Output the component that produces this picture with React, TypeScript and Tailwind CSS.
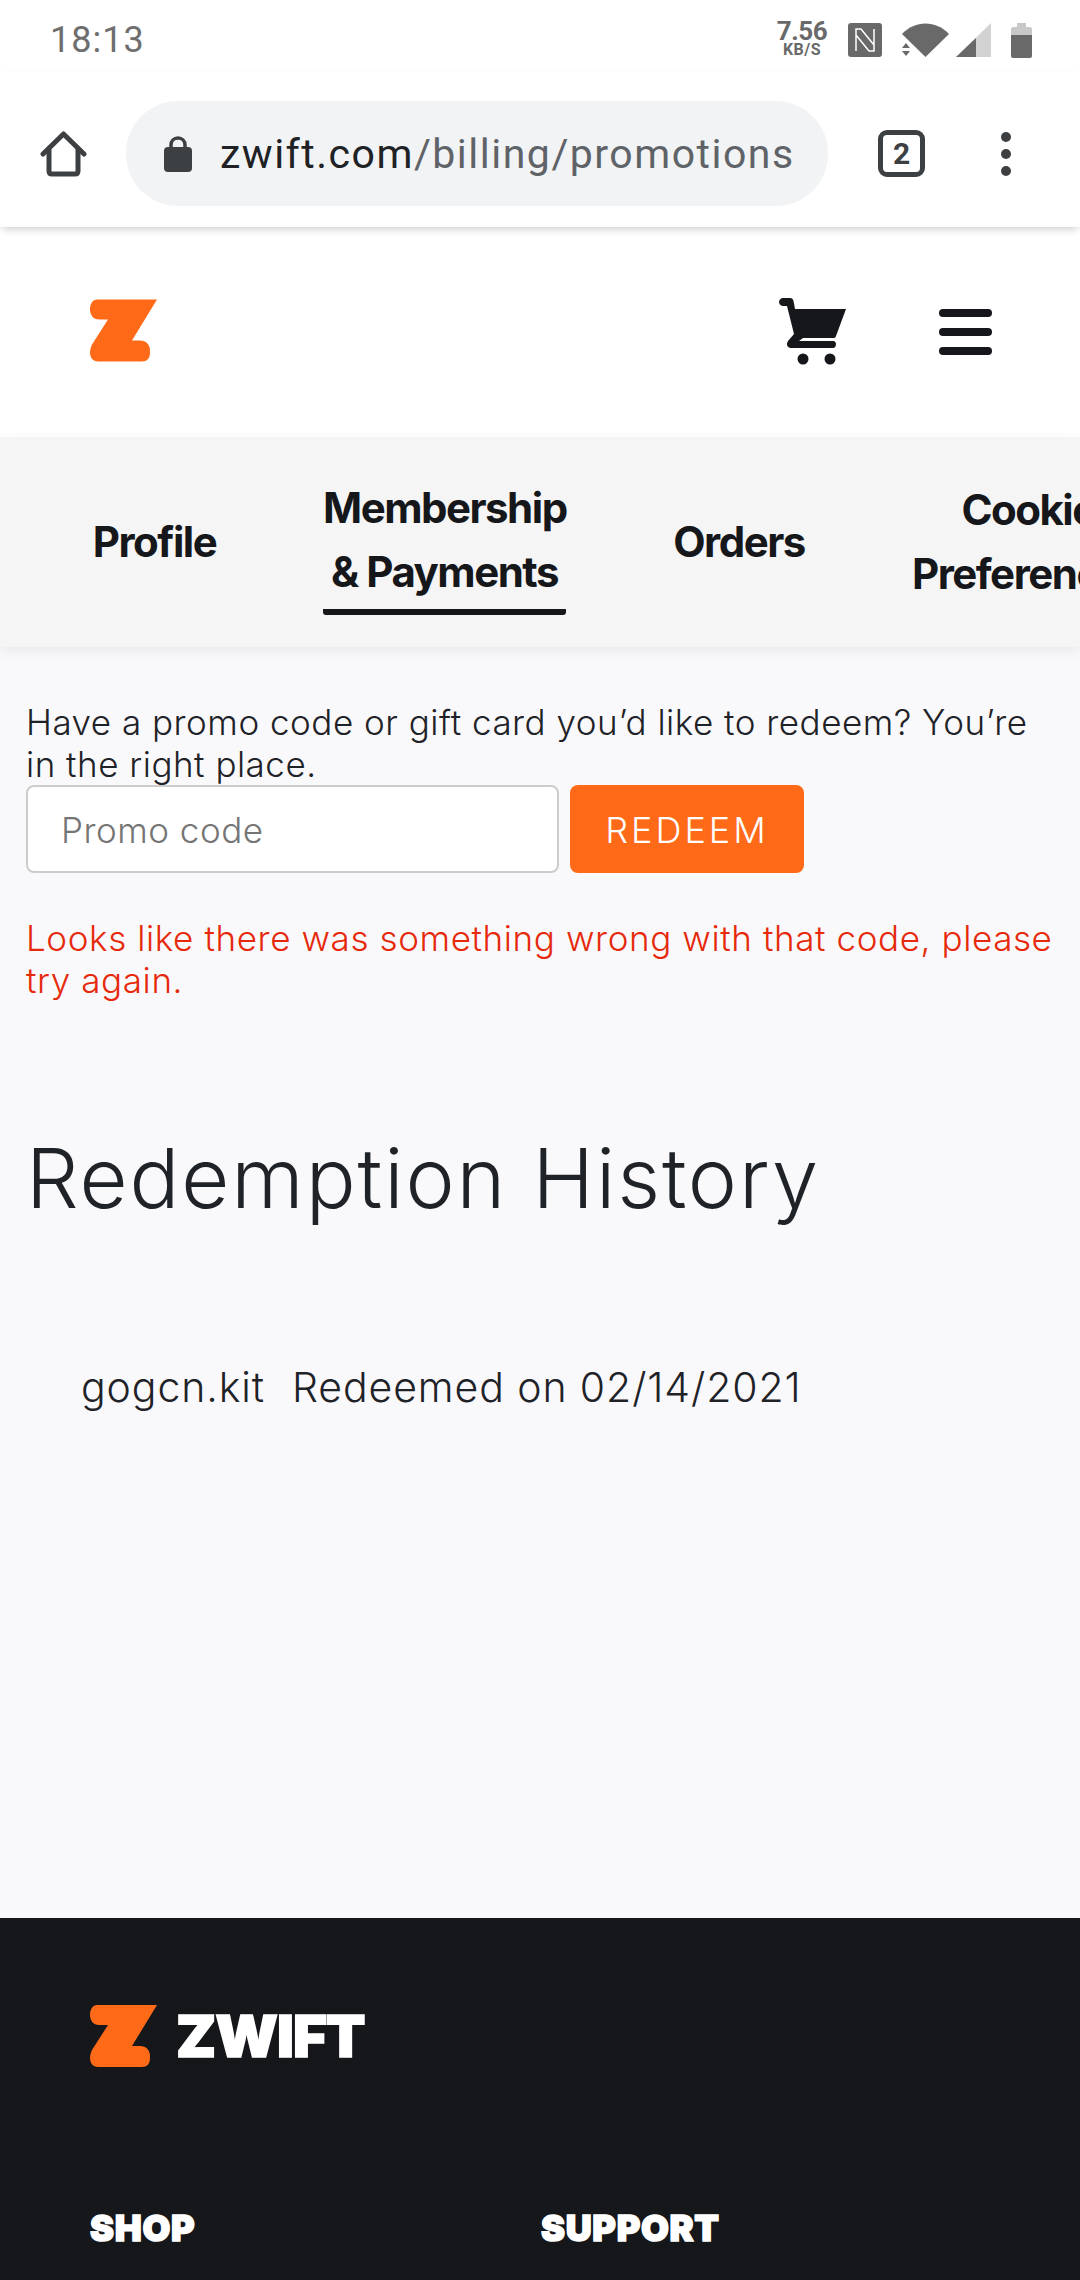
function ZMark({ className }: { className: string }) {
  return (
    <svg viewBox="0 0 67 62" className={className} fill="#ff6a19">
      <path d="M7 0H67L42 41H50C56 41 60 45 60 51V53C60 59 57 62 52 62H8C3 62 0 58 0 53C0 50 1 47 2 45L18 20H9C3 20 0 15 0 10C0 4 3 0 7 0Z" />
    </svg>
  )
}

function StatusBar() {
  return (
    <div className="flex h-[72px] items-center justify-between pl-[50px] pr-[48px] bg-white">
      <span className="text-[36px] leading-none tracking-[1px] text-[#6e6e6e] mt-[8px] font-['Roboto',sans-serif]">18:13</span>
      <div className="flex items-center mt-[8px] text-[#696969]">
        <div className="flex flex-col items-center w-[50px] -mt-[4px] font-['Roboto',sans-serif] font-bold">
          <span className="text-[26px] leading-[24px] tracking-[-0.5px]">7.56</span>
          <span className="text-[16px] leading-[14px] tracking-[0.5px]">KB/S</span>
        </div>
        <svg viewBox="0 0 34 34" className="w-[34px] h-[34px] ml-[21px]">
          <rect width="34" height="34" rx="3" fill="#696969" />
          <path d="M8 28V6H13L26 22M26 6V28H21L8 12" fill="none" stroke="#fff" strokeWidth="1.500" />
        </svg>
        <svg viewBox="0 0 47 34" className="w-[47px] h-[34px] ml-[20px]">
          <path d="M0 11C13 -3 34 -3 47 11L23.500 34Z" fill="#696969" />
          <path d="M4 20L8 25H0ZM4 33L0 28H8Z" fill="#696969" />
        </svg>
        <svg viewBox="0 0 35 34" className="w-[35px] h-[34px] ml-[7px]">
          <path d="M35 0V34H0Z" fill="#d2d2d2" />
          <path d="M20 15V34H0Z" fill="#696969" />
        </svg>
        <svg viewBox="0 0 21 35" className="w-[21px] h-[35px] ml-[20px]">
          <path d="M6 0H15V4H19C20 4 21 5 21 6V12H0V6C0 5 1 4 2 4H6Z" fill="#c8c8c8" />
          <path d="M0 12H21V33C21 34 20 35 19 35H2C1 35 0 34 0 33Z" fill="#696969" />
        </svg>
      </div>
    </div>
  )
}

function Toolbar() {
  return (
    <div className="relative z-20 flex h-[155px] items-center bg-white pt-[8px] shadow-[0_4px_8px_-2px_rgba(0,0,0,0.2)]">
      <svg viewBox="0 0 47 47" className="w-[47px] h-[47px] ml-[40px]" fill="none" stroke="#3c4043" strokeWidth="5" strokeLinecap="round" strokeLinejoin="round">
        <path d="M3 24L23.500 4L44 24" />
        <path d="M9 19V41C9 43 10 44 12 44H35C37 44 38 43 38 41V19" />
      </svg>
      <div className="flex h-[105px] w-[702px] ml-[39px] items-center rounded-[52px] bg-[#f1f3f4] pl-[38px]">
        <svg viewBox="0 0 28 36" className="w-[28px] h-[36px]" fill="#3c4043">
          <path d="M7 12V9C7 5 10 2 14 2C18 2 21 5 21 9V12" fill="none" stroke="#3c4043" strokeWidth="3.500" />
          <rect y="11" width="28" height="25" rx="4" />
        </svg>
        <div className="ml-[28px] mt-[2px] whitespace-nowrap text-[41px] leading-none tracking-[1.5px] font-['Roboto',sans-serif] text-[#5f6368]">
          <span className="text-[#202124]">zwift.com</span>/billing/promotions
        </div>
      </div>
      <div className="flex w-[47px] h-[47px] ml-[50px] items-center justify-center rounded-[9px] border-[5px] border-[#3c4043] text-[30px] font-bold leading-none text-[#3c4043] font-['Roboto',sans-serif]">2</div>
      <div className="flex flex-col gap-[7px] ml-[76px]">
        <span className="w-[10px] h-[10px] rounded-full bg-[#3c4043]" />
        <span className="w-[10px] h-[10px] rounded-full bg-[#3c4043]" />
        <span className="w-[10px] h-[10px] rounded-full bg-[#3c4043]" />
      </div>
    </div>
  )
}

function SiteHeader() {
  return (
    <div className="flex h-[210px] items-center bg-white pl-[90px]">
      <ZMark className="w-[67px] h-[63px] mb-[3px]" />
      <svg viewBox="0 0 67 67" className="w-[67px] h-[67px] ml-[622px] mb-[1px]" fill="#15171b">
        <path d="M4 0H11C13 0 14 1 14.500 3L16 11H67L57 38C56.500 39 56 40 55 40H24L20 43H54C56 43 57 44.500 57 46C57 48 56 50 54 50H12C8 50 7 46 9 43L15 36L8 8H4C2 8 0 6 0 4C0 2 2 0 4 0Z" />
        <circle cx="24" cy="61" r="5.500" />
        <circle cx="51" cy="61" r="5.500" />
      </svg>
      <div className="flex flex-col gap-[11px] ml-[93px]">
        <span className="w-[53px] h-[8px] rounded-full bg-[#15171b]" />
        <span className="w-[53px] h-[8px] rounded-full bg-[#15171b]" />
        <span className="w-[53px] h-[8px] rounded-full bg-[#15171b]" />
      </div>
    </div>
  )
}

function Tabs() {
  return (
    <div className="relative z-10 flex h-[210px] items-center overflow-hidden bg-[#f5f5f5] pl-[91px] shadow-[0_4px_12px_rgba(0,0,0,0.07)] text-[42px] leading-[64px] font-bold tracking-[-1.5px] text-[#15171b] font-['Inter',sans-serif] text-center whitespace-nowrap">
      <div className="shrink-0 w-[127px]">Profile</div>
      <div className="shrink-0 w-[243px] ml-[105px] mt-[6px] border-b-[6px] border-[#15171b] rounded-b-[3px] pb-[5px]">
        Membership
        <br />
        &amp; Payments
      </div>
      <div className="shrink-0 w-[134px] ml-[106px]">Orders</div>
      <div className="shrink-0 ml-[106px]">
        Cookie
        <br />
        Preferences
      </div>
    </div>
  )
}

function Promo() {
  return (
    <div className="h-[1271px] bg-[#f9f9fb] pl-[26px] pt-[54px] font-['Inter',sans-serif] font-light text-[35px] leading-[42px] tracking-[0.5px] text-[#1f2227] whitespace-nowrap">
      <p>
        Have a promo code or gift card you’d like to redeem? You’re
        <br />
        in the right place.
      </p>
      <div className="flex gap-[11px]">
        <div className="flex h-[88px] w-[533px] items-center rounded-[8px] border-2 border-[#cccccc] bg-white pl-[33px] pt-[2px] text-[#757575]">Promo code</div>
        <div className="flex h-[88px] w-[234px] items-center justify-center rounded-[8px] bg-[#ff6a19] pt-[2px] text-[36px] text-white tracking-[3px]">REDEEM</div>
      </div>
      <p className="mt-[44px] tracking-[0.6px] text-[#e6290b]">
        Looks like there was something wrong with that code, please
        <br />
        try again.
      </p>
      <h1 className="mt-[129px] text-[83px] leading-[96px] tracking-[1.9px] text-[#1f2227]">Redemption History</h1>
      <div className="flex mt-[136px] pl-[55px] gap-[27px] text-[41px] leading-[50px] tracking-[0.9px]">
        <span>gogcn.kit</span>
        <span>Redeemed on 02/14/2021</span>
      </div>
    </div>
  )
}

function Footer() {
  return (
    <div className="h-[362px] bg-[#15171b] pl-[90px] pt-[87px] text-white font-['Inter',sans-serif] font-black [-webkit-text-stroke:1.5px_#fff]">
      <div className="flex items-center">
        <ZMark className="w-[67px] h-[62px]" />
        <span className="ml-[19px] text-[58px] leading-none tracking-[-1px]">ZWIFT</span>
      </div>
      <div className="flex mt-[141px] text-[36px] leading-[40px] tracking-[0.7px]">
        <span className="w-[451px]">SHOP</span>
        <span>SUPPORT</span>
      </div>
    </div>
  )
}

export default function App() {
  return (
    <div className="w-[1080px] h-[2280px] overflow-hidden bg-white">
      <StatusBar />
      <Toolbar />
      <SiteHeader />
      <Tabs />
      <Promo />
      <Footer />
    </div>
  )
}
